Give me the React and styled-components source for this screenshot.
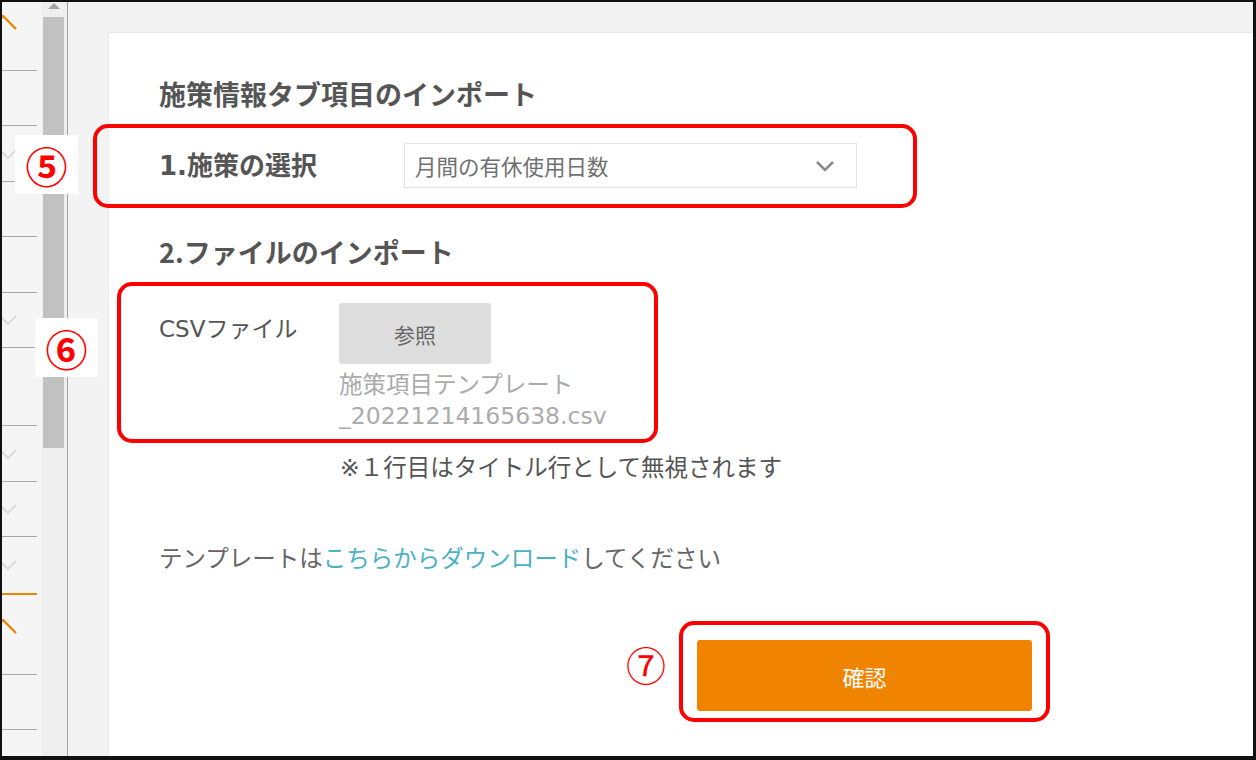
import React from 'react';
import styled, { createGlobalStyle } from 'styled-components';

const GlobalStyle = createGlobalStyle`
  html, body { margin: 0; padding: 0; background: #ffffff; }
  body { font-family: "DejaVu Sans", "Noto Sans CJK JP", sans-serif; }
  * { box-sizing: border-box; }
`;

const navRows = [
  { h: 69, chevron: 'up', top: 13 },
  { h: 55 },
  { h: 56, chevron: 'down' },
  { h: 55 },
  { h: 56 },
  { h: 55, chevron: 'down' },
  { h: 78 },
  { h: 56, chevron: 'down' },
  { h: 55, chevron: 'down' },
  { h: 58, chevron: 'down', active: true },
  { h: 80, chevron: 'up', top: 24 },
  { h: 55 },
  { h: 40, last: true },
];

function Chevron({ dir, top }) {
  if (dir === 'up') {
    return (
      <ChevronIcon $top={top} width="16" height="16" viewBox="0 0 16 16">
        <polyline points="-12,14 1,1 14,14" fill="none" stroke="#f08300" strokeWidth="2.4" />
      </ChevronIcon>
    );
  }
  return (
    <ChevronIcon width="16" height="12" viewBox="0 0 16 12">
      <polyline points="-2,2 6,10 14,2" fill="none" stroke="#d6d6d6" strokeWidth="1.6" />
    </ChevronIcon>
  );
}

export default function App() {
  return (
    <>
      <GlobalStyle />
      <Frame>
        <Nav>
          {navRows.map((r, i) => (
            <NavRow key={i} $h={r.h} $active={r.active} $last={r.last} $chevronTop={r.top}>
              {r.chevron && <Chevron dir={r.chevron} top={r.top} />}
            </NavRow>
          ))}
        </Nav>
        <Scroll>
          <ScrollArrow />
          <ScrollThumb />
        </Scroll>
        <Main>
          <Card>
            <Title>施策情報タブ項目のインポート</Title>

            <SelectRow>
              <Highlight $t={-19} $l={-66} $r={-60} $b={-20} />
              <Heading $w={245}>1.施策の選択</Heading>
              <Select>
                <span>月間の有休使用日数</span>
                <svg width="20" height="12" viewBox="0 0 20 12">
                  <polyline points="2,2 10,10 18,2" fill="none" stroke="#8a8a8a" strokeWidth="2.6" />
                </svg>
              </Select>
            </SelectRow>

            <SubTitle>2.ファイルのインポート</SubTitle>

            <FileRow>
              <Highlight $t={-21} $l={-42} $r={-54} $b={-11} />
              <FieldLabel>CSVファイル</FieldLabel>
              <FileColumn>
                <BrowseButton>参照</BrowseButton>
                <FileName>施策項目テンプレート</FileName>
                <FileName>_20221214165638.csv</FileName>
              </FileColumn>
            </FileRow>

            <Note>※１行目はタイトル行として無視されます</Note>

            <Template>
              テンプレートは<Link href="#">こちらからダウンロード</Link>してください
            </Template>

            <ConfirmWrap>
              <Highlight $t={-19} $l={-18} $r={-18} $b={-11} />
              <Marker $left={-71} $top={5}>⑦</Marker>
              <ConfirmButton>確認</ConfirmButton>
            </ConfirmWrap>
          </Card>
        </Main>

        <Badge $left={13} $top={133}>⑤</Badge>
        <Badge $left={33} $top={316}>⑥</Badge>
      </Frame>
    </>
  );
}

const Frame = styled.div`
  position: relative;
  width: 1256px;
  height: 760px;
  border: 2px solid #111111;
  border-right-width: 3px;
  border-bottom-width: 4px;
  display: flex;
  overflow: hidden;
  background: #f3f3f3;
`;

const Nav = styled.div`
  width: 40px;
  flex-shrink: 0;
  background: #f5f5f5;
  display: flex;
  flex-direction: column;
  overflow: hidden;
`;

const NavRow = styled.div`
  position: relative;
  width: 35px;
  height: ${p => p.$h}px;
  flex-shrink: 0;
  display: flex;
  align-items: ${p => (p.$chevronTop != null ? 'flex-start' : 'center')};
  border-bottom: ${p => (p.$last ? 'none' : p.$active ? '2px solid #f08300' : '1px solid #a8a8a8')};
`;

const ChevronIcon = styled.svg`
  display: block;
  margin-top: ${p => (p.$top != null ? p.$top : 0)}px;
  overflow: hidden;
`;

const Scroll = styled.div`
  width: 26px;
  flex-shrink: 0;
  padding: 0 3px 0 1px;
  background: #efefef;
  border-right: 1px solid #a0a0a0;
  display: flex;
  flex-direction: column;
  align-items: stretch;
`;

const ScrollArrow = styled.div`
  align-self: center;
  width: 0;
  height: 0;
  margin-top: 1px;
  border-left: 6px solid transparent;
  border-right: 6px solid transparent;
  border-bottom: 6px solid #a3a3a3;
`;

const ScrollThumb = styled.div`
  margin-top: 8px;
  height: 431px;
  background: #c1c1c1;
`;

const Main = styled.div`
  flex: 1;
  display: flex;
  padding: 30px 0 0 40px;
  background: #f3f3f3;
`;

const Card = styled.div`
  flex: 1;
  background: #ffffff;
  border-top: 1px solid #e6e6e6;
  border-left: 1px solid #ececec;
  padding: 41px 0 0 50px;
  display: flex;
  flex-direction: column;
  align-items: flex-start;
  color: #555555;
`;

const Title = styled.div`
  font-family: "Noto Sans CJK JP", sans-serif;
  font-size: 27px;
  font-weight: 700;
  line-height: 40px;
  color: #555555;
`;

const SubTitle = styled(Title)`
  margin-top: 44px;
`;

const Heading = styled.div`
  width: ${p => p.$w}px;
  font-size: 26px;
  font-weight: 700;
  line-height: 40px;
  color: #555555;
`;

const Highlight = styled.div`
  position: absolute;
  top: ${p => p.$t}px;
  left: ${p => p.$l}px;
  right: ${p => p.$r}px;
  bottom: ${p => p.$b}px;
  border: 4px solid #ff0000;
  border-radius: 15px;
  pointer-events: none;
`;

const SelectRow = styled.div`
  position: relative;
  margin-top: 29px;
  display: flex;
  align-items: center;
`;

const Select = styled.div`
  width: 453px;
  height: 45px;
  border: 1px solid #e3e3e3;
  display: flex;
  align-items: center;
  justify-content: space-between;
  padding: 0 21px 0 10px;
  font-size: 21.5px;
  color: #707070;
`;

const FileRow = styled.div`
  position: relative;
  margin-top: 31px;
  width: 445px;
  display: flex;
  align-items: flex-start;
`;

const FieldLabel = styled.div`
  width: 180px;
  flex-shrink: 0;
  margin-top: 11px;
  font-size: 23px;
  line-height: 30px;
  color: #555555;
`;

const FileColumn = styled.div`
  display: flex;
  flex-direction: column;
  align-items: flex-start;
`;

const BrowseButton = styled.button`
  width: 152px;
  height: 61px;
  margin-bottom: 6px;
  border: none;
  border-radius: 3px;
  background: #dedede;
  font-family: "Noto Sans CJK JP", sans-serif;
  font-size: 21px;
  color: #666666;
  cursor: pointer;
`;

const FileName = styled.div`
  font-size: 23.5px;
  line-height: 31px;
  color: #ababab;
  white-space: nowrap;
`;

const Note = styled.div`
  margin: 21px 0 0 181px;
  font-size: 23.5px;
  line-height: 30px;
  color: #555555;
`;

const Template = styled.div`
  margin-top: 59px;
  font-family: "Noto Sans CJK JP", sans-serif;
  font-size: 23.5px;
  line-height: 30px;
  color: #666666;
`;

const Link = styled.a`
  color: #4bb1c5;
  text-decoration: none;
`;

const ConfirmWrap = styled.div`
  position: relative;
  margin: 68px 0 0 538px;
`;

const ConfirmButton = styled.button`
  display: block;
  width: 335px;
  height: 71px;
  border: none;
  border-radius: 3px;
  background: #f08300;
  color: #ffffff;
  font-family: "Noto Sans CJK JP", sans-serif;
  font-size: 22px;
  cursor: pointer;
`;

const Marker = styled.div`
  position: absolute;
  left: ${p => p.$left}px;
  top: ${p => p.$top}px;
  font-family: "Noto Sans CJK JP", sans-serif;
  font-size: 40px;
  line-height: 38px;
  font-weight: 400;
  color: #ff0000;
`;

const Badge = styled.div`
  position: absolute;
  left: ${p => p.$left}px;
  top: ${p => p.$top}px;
  width: 63px;
  height: 59px;
  background: #ffffff;
  display: flex;
  align-items: center;
  justify-content: center;
  font-family: "Noto Sans CJK JP", sans-serif;
  font-size: 42px;
  font-weight: 700;
  color: #ff0000;
`;
